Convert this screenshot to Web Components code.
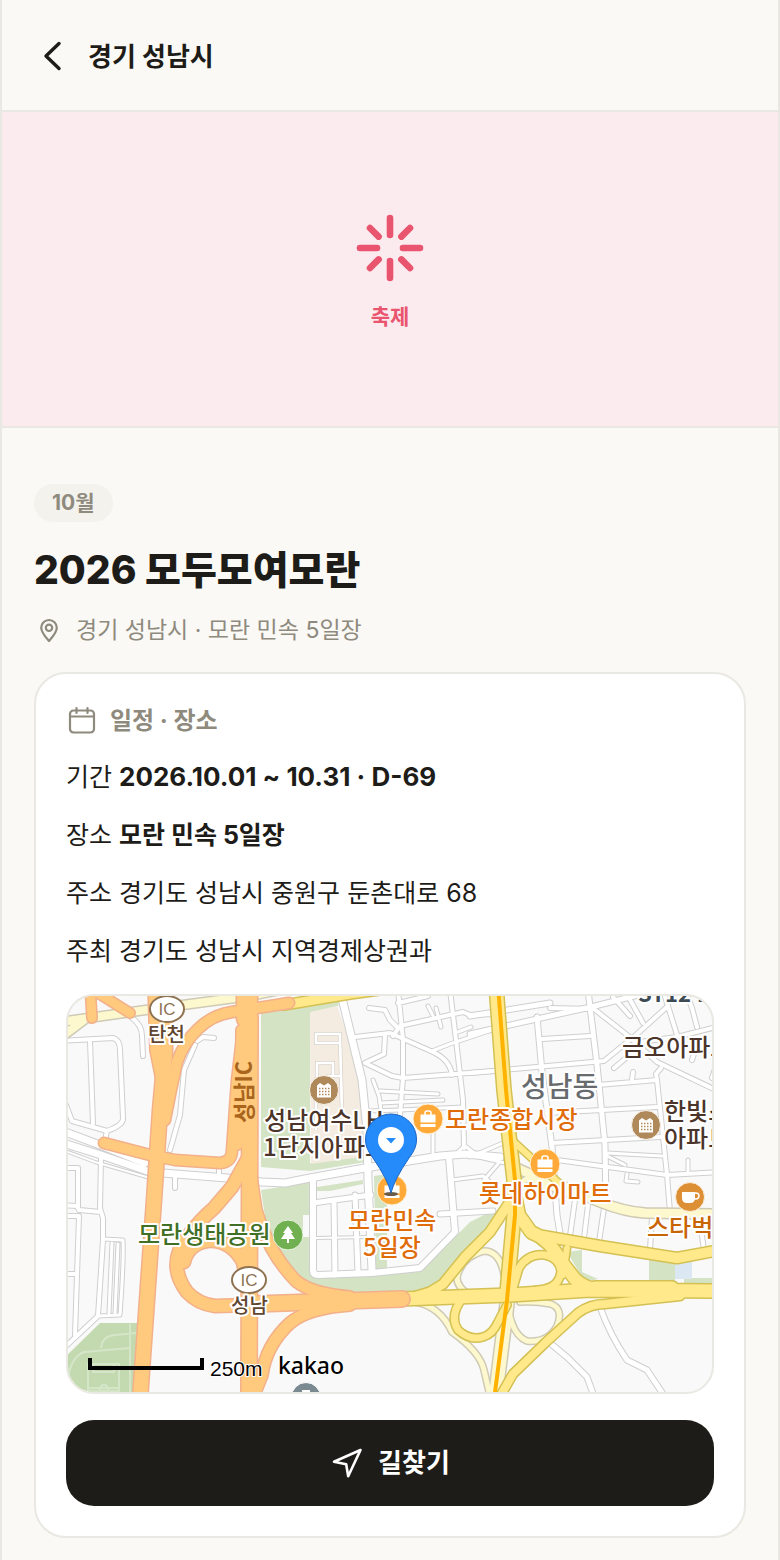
<!DOCTYPE html>
<html lang="ko">
<head>
<meta charset="utf-8">
<meta name="viewport" content="width=device-width, initial-scale=1">
<title>2026 모두모여모란</title>
<style>
  :root {
    --bg: #faf9f5;
    --ink: #1e1c18;
    --muted: #8f8a7e;
    --line: #e9e8e2;
    --accent: #e9546f;
  }
  body {
    margin: 0;
    background: var(--bg);
    color: var(--ink);
    font-family: Inter, "Noto Sans CJK KR", sans-serif;
  }
  .period {
    font-size: 26px;
  }
</style>
</head>
<body>
<festival-page>
  <app-header slot="header">경기 성남시</app-header>
  <festival-hero slot="hero">축제</festival-hero>
  <festival-title month="10월" place="경기 성남시 · 모란 민속 5일장">2026 모두모여모란</festival-title>
  <info-card heading="일정 · 장소">
    <info-row label="기간"><b class="period">2026.10.01 ~ 10.31 · D-69</b></info-row>
    <info-row label="장소"><b>모란 민속 5일장</b></info-row>
    <info-row label="주소">경기도 성남시 중원구 둔촌대로 68</info-row>
    <info-row label="주최">경기도 성남시 지역경제상권과</info-row>
    <place-map slot="footer"></place-map>
    <route-button slot="footer">길찾기</route-button>
  </info-card>
</festival-page>

<script>
class BaseElement extends HTMLElement {
  connectedCallback() {
    if (!this.shadowRoot) {
      this.attachShadow({mode: 'open'});
      const template = document.createElement('template');
      template.innerHTML = this.template();
      this.shadowRoot.appendChild(template.content.cloneNode(true));
    }
  }
}

class FestivalPage extends BaseElement {
  template() {
    return `
      <style>
        :host {
          display: block;
          box-sizing: border-box;
          min-height: 100vh;
          border: solid var(--line);
          border-width: 0 2px;
        }
        main {
          padding: 56px 32px 22px;
        }
      </style>
      <slot name="header"></slot>
      <slot name="hero"></slot>
      <main><slot></slot></main>
    `;
  }
}

class AppHeader extends BaseElement {
  template() {
    return `
      <style>
        :host {
          display: flex;
          align-items: center;
          gap: 8px;
          height: 106px;
          padding: 4px 22px 0;
          border-bottom: 2px solid var(--line);
        }
        button {
          display: flex;
          padding: 8px;
          border: 0;
          background: none;
          color: inherit;
        }
        h2 {
          margin: 0;
          font-size: 26px;
          line-height: 40px;
          font-weight: 700;
        }
      </style>
      <button type="button" aria-label="뒤로">
        <svg width="40" height="40" viewBox="0 0 40 40" fill="none" stroke="currentColor"
          stroke-width="3.400" stroke-linecap="round" stroke-linejoin="round"><path d="M27 6.500 14 19l13 12.500"/></svg>
      </button>
      <h2><slot></slot></h2>
    `;
  }
}

class FestivalHero extends BaseElement {
  template() {
    return `
      <style>
        :host {
          display: flex;
          flex-direction: column;
          align-items: center;
          justify-content: center;
          gap: 14px;
          height: 312px;
          padding-top: 2px;
          background: #fcebee;
          color: var(--accent);
          border-bottom: 2px solid var(--line);
          font-size: 21px;
          line-height: 30px;
          font-weight: 700;
        }
      </style>
      <svg width="80" height="80" viewBox="0 0 80 80" stroke="currentColor" stroke-width="6.600" stroke-linecap="round">
        <path d="M40 10v17M40 53v17M10 40h17M53 40h17M20 20l8.600 8.600M51.400 51.400 60 60M20 60l8.600-8.600M51.400 28.600 60 20"/>
      </svg>
      <slot></slot>
    `;
  }
}

class FestivalTitle extends BaseElement {
  template() {
    return `
      <style>
        :host {
          display: block;
        }
        .month {
          display: inline-block;
          padding: 0 18px;
          border-radius: 20px;
          background: #f3f2ed;
          color: var(--muted);
          font-size: 21px;
          line-height: 38px;
          font-weight: 700;
          vertical-align: top;
        }
        h1 {
          margin: 18px 0 10px;
          font-size: 39px;
          line-height: 60px;
          font-weight: 800;
        }
        p {
          display: flex;
          align-items: center;
          gap: 12px;
          margin: 0 0 22px;
          color: var(--muted);
          font-size: 23px;
          line-height: 40px;
        }
      </style>
      <span class="month">${this.getAttribute('month')}</span>
      <h1><slot></slot></h1>
      <p>
        <svg width="30" height="30" viewBox="0 0 30 30" fill="none" stroke="currentColor" stroke-width="2.200" stroke-linejoin="round">
          <path d="M15 26c-4-4.500-7.800-8.500-7.800-13.200a7.800 7.800 0 0 1 15.600 0c0 4.700-3.800 8.700-7.800 13.200z"/>
          <circle cx="15" cy="12.800" r="3.200"/>
        </svg>
        <span>${this.getAttribute('place')}</span>
      </p>
    `;
  }
}

class InfoCard extends BaseElement {
  template() {
    return `
      <style>
        :host {
          display: block;
          padding: 30px;
          border: 2px solid var(--line);
          border-radius: 32px;
          background: #fff;
        }
        section {
          display: flex;
          flex-direction: column;
          gap: 16px;
        }
        h3 {
          display: flex;
          align-items: center;
          gap: 12px;
          margin: 0 0 2px;
          color: var(--muted);
          font-size: 24px;
          line-height: 34px;
          font-weight: 700;
        }
        footer {
          display: flex;
          flex-direction: column;
          gap: 26px;
          margin-top: 22px;
        }
      </style>
      <section>
        <h3>
          <svg width="32" height="32" viewBox="0 0 32 32" fill="none" stroke="currentColor" stroke-width="2.200" stroke-linecap="round">
            <rect x="4" y="5.500" width="24" height="22" rx="3.500"/>
            <path d="M4 11.500H28M10.500 3v5M21.500 3v5"/>
          </svg>
          ${this.getAttribute('heading')}
        </h3>
        <slot></slot>
      </section>
      <footer><slot name="footer"></slot></footer>
    `;
  }
}

class InfoRow extends BaseElement {
  template() {
    return `
      <style>
        :host {
          display: block;
          font-size: 25px;
          line-height: 42px;
        }
      </style>
      ${this.getAttribute('label')} <slot></slot>
    `;
  }
}

class RouteButton extends BaseElement {
  template() {
    return `
      <style>
        :host {
          display: block;
        }
        button {
          display: flex;
          align-items: center;
          justify-content: center;
          gap: 14px;
          width: 100%;
          height: 86px;
          padding: 0;
          border: 0;
          border-radius: 28px;
          background: var(--ink);
          color: #fff;
          font: inherit;
          font-size: 26px;
          line-height: 40px;
          font-weight: 700;
        }
      </style>
      <button type="button">
        <svg width="34" height="34" viewBox="0 0 34 34" fill="none" stroke="currentColor" stroke-width="2.600" stroke-linejoin="round">
          <path d="M30.500 4 4 15.800l12.200 2.400 2 12z"/>
        </svg>
        <slot></slot>
      </button>
    `;
  }
}

// Road layers from bottom to top: [casing, fill, casing width, [[width, path], ...]]
const ROADS = [
  ['#cfcfcf', '#fff', 2, [
    [4, 'M60 1041 113 1038Q120 1040 120 1050L123 1118Q124 1125 107 1131L72 1121 66 1105M90 1041 93 1124M107 1131 104 1145'],
    [4, 'M132 1018Q142 1025 142 1036L143 1056M195 1045 184 1070 180 1115 170 1150M197 1041 203 1037 214 1038M175 1176V1188M219 1168V1178'],
    [4, 'M101 1158 100 1208 103 1218 103 1240 98 1316 64 1348M66 1168H78V1208M60 1205 77 1206 79 1210 101 1212M60 1216H79L75 1335M60 1274H75'],
    [3, 'M103 1239 123 1240Q124 1260 120 1315L98 1316M112 1243 109 1313M118 1244 115 1314'],
    [4, 'M369 1008 385 1010 390 1020 398 1028M398 990 403 1040V1078L400 1115M393 1036 400 1026 463 1012 470 1015 495 1014M398 1003 428 996'],
    [4, 'M450 990 456 1040 463 1100 464 1148M355 1037 390 1033 433 1052Q450 1060 452 1075M385 1035 384 1054 365 1063 392 1076 403 1078 495 1071'],
    [3, 'M432 1051 450 1044 495 1029M428 1006 433 1016M436 1008 441 1027M458 1032 471 1027M373 1080 379 1096 381 1110'],
    [3, 'M380 1091 438 1094M380 1103 443 1100M368 1111 400 1110 463 1107M433 1130V1154M464 1146 458 1152M465 1146 473 1152M452 1180 483 1176 490 1182'],
    [6, 'M449 1157 455 1232 420 1268 372 1273 318 1275Q313 1275 313 1270V1182'],
    [5, 'M440 1214 493 1211M334 1200 335 1275M355 1195 358 1272M313 1203 371 1195'],
    [2, 'M315 1238 370 1237'],
    [5, 'M470 1034 595 1006 650 992M470 1016 550 1003M537 1017 542 1072 552 1147 557 1215 560 1233M588 990 597 1065 605 1145 606 1205'],
    [4, 'M542 1039 590 1036M470 1073 604 1061 637 1034 668 1006M550 1008 594 1009 626 1034 657 1062 720 1092M628 996 643 1023M613 997 630 1016'],
    [4, 'M663 990 677 1035M677 1037 720 1026M640 1042 677 1037M685 990 692 1008 697 1027M614 1068 638 1048M712 1078 718 1060M692 1060 697 1045'],
    [4, 'M598 1085 657 1080 656 1074 661 1068M632 1080 633 1072M657 1080 667 1175 670 1212M547 1113 657 1107M552 1143 660 1137M557 1160 667 1175 720 1172'],
    [3, 'M607 1153 662 1156M607 1156 625 1165M688 1172V1160M627 1174 626 1181 638 1182M470 1157 503 1143M484 1180 498 1164M470 1155 505 1163'],
    [4, 'M588 1205 584 1238M575 1200 570 1236M604 1208 599 1242M652 1217 650 1250M699 1215 704 1250'],
    [5, 'M600 1307Q610 1335 627 1360L647 1370 663 1394M550 1343 568 1358 587 1377 594 1396'],
    [7, 'M340 990 362 1080 367 1130 368 1180 372 1270'],
    [7, 'M60 1130 100 1145 145 1163M60 1142 98 1154 150 1172 227 1178 262 1182 285 1183 310 1178 365 1168 440 1156 465 1154 500 1157'],
    [2, 'M60 1149 95 1162 150 1178'],
  ]],
  ['#cfcab5', '#fdf8cd', 3, [
    [9, 'M555 1183 600 1202Q625 1212 645 1213L720 1214M512 1166 530 1174 565 1192'],
    [8, 'M60 1022 160 1008 250 996 300 986M60 1038 84 1020'],
    [5, 'M470 1295Q452 1284 459 1271 465 1256 484 1251 498 1251 503 1270L508 1290M508 1306Q512 1335 527 1341 548 1343 557 1326 564 1309 551 1304 535 1301 520 1302M522 1182Q532 1173 548 1190'],
    [5, 'M415 1302Q440 1306 452 1332 480 1352 484 1370L490 1396'],
    [13, 'M508 1296 495 1400'],
  ]],
  ['#d4c153', '#ffe98b', 3, [
    [9, 'M284 1005 350 994 380 990'],
    [6, 'M514 1142 560 1184M567 1248 563 1275'],
    [7, 'M462 1299Q449 1316 458 1330 470 1341 483 1337 493 1334 498 1322L507 1305'],
    [7, 'M513 1288 519 1268Q528 1253 545 1255 560 1258 561 1272 559 1286 545 1289L520 1293'],
    [9, 'M410 1298 430 1292 443 1284 465 1257 490 1232 509 1203'],
    [8, 'M498 1400 513 1374 545 1343 578 1313Q590 1304 605 1304L680 1296'],
    [10, 'M532 1234 600 1246 677 1258 720 1250'],
    [12, 'M515 1195 519 1215 531 1232Q550 1240 561 1261L575 1279Q584 1288 600 1290'],
    [13, 'M496 985 504 1090 514 1180V1215L507 1292'],
    [13, 'M400 1299 510 1295 590 1290 720 1291M595 1288H672'],
  ]],
  ['#f3b08a', '#ffca7e', 3, [
    [9, 'M90 985 92 1018M90 988 130 1013'],
    [10, 'M165 1120 171 1090 177 1062Q184 1042 198 1029 212 1015 232 1012L289 1003'],
    [10, 'M104 1143 150 1155 175 1160 220 1163Q232 1162 232 1150L237 1080 243 1030'],
    [13, 'M155 985 157 1050 164 1085'],
    [12, 'M247 1160 232 1187 214 1208Q200 1220 188 1236 166 1264 187 1292 198 1304 215 1306L285 1304'],
    [12, 'M184 1262Q188 1244 207 1241 230 1239 243 1262L249 1292'],
    [11, 'M250 1170 256 1210Q268 1252 296 1281 312 1294 350 1297M252 1400 262 1375Q266 1345 290 1323 308 1308 350 1305'],
    [14, 'M165 985V1055L160 1110 154 1200 140 1400'],
    [9, 'M241 1030 240 1120 238 1145'],
    [20, 'M247 985V1018'],
    [15, 'M250 1018 249 1400M255 1304 402 1299'],
  ]],
];

const AREAS = [
  ['#d3e3c4', 'M261 1009 340 1000 338 1006 310 1013V1163L366 1155V1162L310 1171 261 1167zM261 1190 300 1184 313 1181V1275H375L420 1270 440 1252 470 1222 490 1212H500L460 1262 430 1290 350 1296 305 1286 270 1250z'],
  ['#f4ebe1', 'M310 1012 337 1006 352 1050 364 1095 367 1156 311 1164z'],
  ['#d3e3c4', 'M317 1187 363 1180V1184L330 1191H317zM374 1176 395 1173 387 1200V1270H376z'],
  ['#f9f9f9', 'M303 1215H312V1237H303z'],
  ['#d3e3c4', 'M567 1252 582 1250V1272L598 1279 585 1282zM649 1260H675V1281H649zM684 1278H720V1284H684z'],
  ['#dbe8f3', 'M675 1260H692V1279H675z'],
  ['#c3dab0', 'M100 1323H140V1400H60V1362z'],
];

// kind, y of the first baseline, then one [x, text] for each line
const LABELS = [
  ['place', 1042, [148, '탄천']],
  ['place', 1313, [231, '성남']],
  ['apt', 1129, [264, '성남여수LH'], [263, '1단지아파트']],
  ['apt', 1056, [622, '금오아파트']],
  ['apt', 1120, [664, '한빛스'], [664, '아파트']],
  ['shop', 1128, [445, '모란종합시장']],
  ['shop', 1202, [479, '롯데하이마트']],
  ['shop', 1229, [348, '모란민속'], [363, '5일장']],
  ['cafe', 1236, [647, '스타벅스']],
  ['park', 1243, [138, '모란생태공원']],
  ['dong', 1097, [521, '성남동']],
  ['bus', 1002, [638, 'ST12 1']],
];

const bag = (x, y) => `
  <g transform="translate(${x} ${y})">
    <circle r="15" fill="#ffaa38" stroke="#fff3dc"/>
    <path d="M-3-4v-2q0-2 2-2h2q2 0 2 2v2" fill="none" stroke="#fff" stroke-width="1.500"/>
    <path d="M-7.500-4.500h15v8h-15zM-7.500 5h15v3h-15z" fill="#fff"/>
  </g>`;

const apartment = (x, y) => `
  <g transform="translate(${x} ${y})">
    <circle r="14.500" fill="#af895a" stroke="#f8f3ea"/>
    <path d="M-7 7.500v-12l3-2.500 4 2.500 4-2.500 3 2.500v12z" fill="#fff"/>
    <path d="M-5-1.500h11M-5 1.500h11M-5 4.500h11" stroke="#af895a" stroke-width="1.500" stroke-dasharray="1.500 1.500"/>
  </g>`;

const interchange = (x, y) => `
  <ellipse cx="${x}" cy="${y}" rx="17" ry="13" fill="#fff" stroke="#8f7352" stroke-width="2"/>
  <text class="ic" x="${x}" y="${y + 6}" text-anchor="middle">IC</text>`;

class PlaceMap extends BaseElement {
  roads() {
    return ROADS.map(([casing, fill, edge, paths]) => `
      <g stroke="${casing}">${paths.map(([w, d]) => `<path d="${d}" stroke-width="${w + edge}"/>`).join('')}</g>
      <g stroke="${fill}">${paths.map(([w, d]) => `<path d="${d}" stroke-width="${w}"/>`).join('')}</g>
    `).join('');
  }

  labels() {
    return LABELS.map(([kind, y, ...lines]) => `
      <text class="${kind}">${lines.map(([x, text], i) => `<tspan x="${x}" y="${y + i * 27}">${text}</tspan>`).join('')}</text>
    `).join('');
  }

  template() {
    return `
      <style>
        :host {
          display: block;
          overflow: hidden;
          border: 2px solid var(--line);
          border-radius: 28px;
          background: #f9f9f9;
        }
        svg {
          display: block;
          width: 100%;
        }
        text {
          font-family: "Noto Sans CJK KR", sans-serif;
          font-size: 24px;
          font-weight: 500;
          stroke: #fff;
          stroke-width: 4px;
          stroke-linejoin: round;
          paint-order: stroke;
        }
        .place { font-size: 20px; fill: #5f4630; }
        .apt { fill: #4b3429; }
        .shop { fill: #e06c0a; }
        .cafe { fill: #c96404; }
        .park { fill: #3f7026; }
        .dong { font-size: 28px; fill: #686b6d; }
        .bus { font-size: 22px; font-weight: 700; fill: #3c4a54; }
        .road { font-size: 22px; font-weight: 700; fill: #a9651c; stroke: none; }
        .ic { font-family: "Liberation Sans", sans-serif; font-size: 17px; fill: #8f7352; stroke: none; }
        .scale { font-family: "Liberation Sans", sans-serif; font-size: 21px; font-weight: 400; stroke-width: 2px; }
        .brand { font-family: "Noto Sans", sans-serif; font-size: 23px; stroke-width: 2px; }
      </style>
      <svg viewBox="68 996 644 396" role="img" aria-label="지도">
        ${AREAS.map(([fill, d]) => `<path d="${d}" fill="${fill}"/>`).join('')}
        <g fill="none" stroke="#d5e6c8" stroke-width="2">
          <path d="M68 1380Q70 1358 84 1352L130 1348M101 1348Q102 1336 115 1335L137 1333M130 1324V1392M88 1364H119V1391H88zM93 1364V1372H114V1364M88 1388H119"/>
          <circle cx="104" cy="1389" r="4"/>
        </g>
        <g fill="none" stroke="#d8d3cc" stroke-width="4">
          <path id="blocks" d="M316 1034H340V1043H316zM340 1040 342 1110M333 1076V1063H317V1078H324M316 1078V1130M326 1076H340"/>
          <use href="#blocks" stroke="#fff" stroke-width="2"/>
        </g>
        <path d="M316 1034H340V1043H316zM340 1040 342 1110M333 1076V1063H317V1078H324M316 1078V1130M326 1076H340" fill="none" stroke="#fff" stroke-width="2.500"/>
        <g fill="none" stroke-linecap="round" stroke-linejoin="round">
          ${this.roads()}
          <path d="M498 985 506 1090 515 1180 515 1215 507 1300 494 1400" stroke="#ffb300" stroke-width="4"/>
        </g>

        ${apartment(324, 1090)}
        ${apartment(646, 1125)}
        ${bag(428, 1119)}
        ${bag(545, 1164)}
        ${bag(392, 1190)}
        <g transform="translate(690 1197)">
          <circle r="14.500" fill="#dc8f34" stroke="#fbeedd"/>
          <path d="M-8-5h13v6q0 5-5 5h-3q-5 0-5-5z" fill="#fff"/>
          <circle cx="6" cy="-1" r="3" fill="none" stroke="#fff" stroke-width="1.500"/>
        </g>
        <g transform="translate(288 1235)">
          <circle r="15" fill="#70b050" stroke="#e9f4e2"/>
          <path d="M0-9 5-2H3l4 6H1v4h-2V4h-6l4-6h-2z" fill="#fff"/>
        </g>
        <g transform="translate(306 1397)">
          <circle r="14.500" fill="#7b8a91" stroke="#fff"/>
          <path d="M-4-7H4V0H-4z" fill="#fff"/>
        </g>
        ${interchange(167, 1009)}
        ${interchange(249, 1280)}

        ${this.labels()}
        <text class="road" transform="translate(252 1123) rotate(-90)">성남IC</text>

        <ellipse cx="391" cy="1194" rx="7" ry="2" fill="#6b5a45"/>
        <path d="M391 1193Q388 1180 373 1158 365 1148 365.500 1139A25.500 25 0 0 1 416.500 1139Q417 1148 409 1158 394 1180 391 1193z" fill="#258bfb" stroke="#1c66c4"/>
        <circle cx="391" cy="1140" r="13" fill="#fff"/>
        <path d="M386 1138H396L391 1143.500z" fill="#258bfb"/>

        <path d="M90 1358V1368H202V1358" fill="none" stroke="#000" stroke-width="4"/>
        <text class="scale" x="210" y="1376">250m</text>
        <text class="brand" x="278" y="1374">kakao</text>
      </svg>
    `;
  }
}

customElements.define('festival-page', FestivalPage);
customElements.define('app-header', AppHeader);
customElements.define('festival-hero', FestivalHero);
customElements.define('festival-title', FestivalTitle);
customElements.define('info-card', InfoCard);
customElements.define('info-row', InfoRow);
customElements.define('place-map', PlaceMap);
customElements.define('route-button', RouteButton);
</script>
</body>
</html>
